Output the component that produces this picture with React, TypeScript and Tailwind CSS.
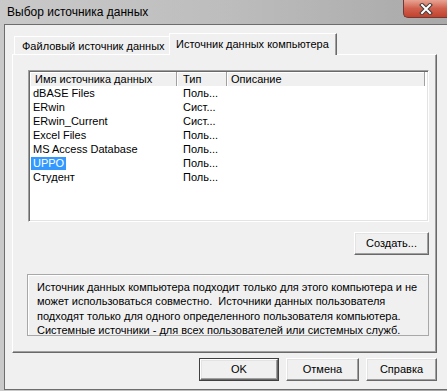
import React from "react";

const rows: [string, string][] = [
  ["dBASE Files", "Поль..."],
  ["ERwin", "Сист..."],
  ["ERwin_Current", "Сист..."],
  ["Excel Files", "Поль..."],
  ["MS Access Database", "Поль..."],
  ["UPPO", "Поль..."],
  ["Студент", "Поль..."],
];

function Button({ label, w, isDefault }: { label: string; w: string; isDefault?: boolean }) {
  return (
    <div className={`${w} h-[23px] shrink-0 ${isDefault ? "border border-[#404040]" : ""}`}>
      <div className="h-full w-full flex items-center justify-center bg-[#f0f0f0] border border-t-white border-l-white border-r-[#696969] border-b-[#696969] shadow-[inset_-1px_-1px_0_#a0a0a0,inset_1px_1px_0_#e3e3e3] text-[11px] text-black">
        {label}
      </div>
    </div>
  );
}

export default function App() {
  return (
    <div className="w-[447px] h-[391px] overflow-hidden flex flex-col bg-gradient-to-r from-[#c9c9c9] via-[#bdbdbd] to-[#a9a9a9] font-['Liberation_Sans',Arial,sans-serif] text-black">
      {/* Title bar */}
      <div className="h-[24px] flex items-start shrink-0">
        <div className="pl-[7px] pt-[5px] text-[12px] leading-[14px] whitespace-nowrap">Выбор источника данных</div>
        <div className="ml-auto w-[44px] h-[18px] rounded-bl-[5px] border-l border-b border-[#6e3a33] bg-gradient-to-b from-[#e8a393] via-[#d0604d] to-[#c2412c] flex items-center justify-center">
          <svg width="14" height="12" viewBox="0 0 14 12">
            <path d="M3 2 L11 10 M11 2 L3 10" stroke="#3c3c3c" strokeWidth="4" strokeLinecap="square" />
            <path d="M3 2 L11 10 M11 2 L3 10" stroke="#ffffff" strokeWidth="2" strokeLinecap="square" />
          </svg>
        </div>
      </div>

      {/* Client area */}
      <div className="flex-1 flex pl-[4px] pb-[1px]">
        <div className="flex-1 bg-[#f0f0f0] border-l border-t border-b border-[#6d6d6d] flex flex-col">
          {/* Tabs */}
          <div className="h-[29px] shrink-0 flex items-end pl-[9px] relative z-10">
            <div className="w-[155px] h-[18px] border-t border-l border-white bg-[#f0f0f0] text-[11px] leading-[14px] pl-[7px] pt-[2px] whitespace-nowrap">
              Файловый источник данных
            </div>
            <div className="w-[168px] h-[22px] -mb-[1px] border-t border-l border-white border-r border-r-[#696969] shadow-[inset_-1px_0_0_#a0a0a0] bg-[#f0f0f0] text-[11px] leading-[14px] pl-[6px] pt-[3px] whitespace-nowrap">
              Источник данных компьютера
            </div>
          </div>

          {/* Tab panel */}
          <div className="ml-[7px] w-[425px] h-[299px] shrink-0 border-t border-l border-white border-r border-b border-r-[#696969] border-b-[#696969] shadow-[inset_-1px_-1px_0_#a0a0a0] pl-[15px] pt-[15px] flex flex-col">
            {/* List */}
            <div className="w-[401px] h-[152px] shrink-0 bg-white border border-t-[#a0a0a0] border-l-[#a0a0a0] border-r-white border-b-white shadow-[inset_1px_1px_0_#696969,inset_-1px_-1px_0_#e3e3e3] p-[1px] pr-[3px] text-[11px] leading-[13px]">
              <div className="flex h-[14px] bg-[#f0f0f0]">
                <div className="w-[147px] pl-[5px] border-r border-[#a0a0a0] shadow-[inset_1px_1px_0_#fff] flex items-center">Имя источника данных</div>
                <div className="w-[50px] pl-[6px] border-r border-[#a0a0a0] shadow-[inset_1px_1px_0_#fff] flex items-center">Тип</div>
                <div className="flex-1 pl-[4px] border-r border-[#a0a0a0] shadow-[inset_1px_1px_0_#fff] flex items-center">Описание</div>
              </div>
              {rows.map(([name, type]) => (
                <div key={name} className="flex h-[14px] items-center">
                  <div className="w-[147px] pl-[1px]">
                    <span className={`px-[2px] inline-block h-[13px] ${name === "UPPO" ? "bg-[#3399ff] text-white" : ""}`}>{name}</span>
                  </div>
                  <div className="w-[50px] pl-[6px]">{type}</div>
                </div>
              ))}
            </div>

            {/* Create button */}
            <div className="w-[401px] flex justify-end mt-[10px]">
              <Button label="Создать..." w="w-[75px]" />
            </div>

            {/* Description */}
            <div className="mt-[19px] -ml-[1px] w-[402px] h-[62px] shrink-0 border border-[#a8a8a8] shadow-[inset_1px_1px_0_#fff] pl-[9px] pt-[5px] text-[11px] leading-[14.3px] whitespace-nowrap">
              Источник данных компьютера подходит только для этого компьютера и не
              <br />
              может использоваться совместно.&nbsp; Источники данных пользователя
              <br />
              подходят только для одного определенного пользователя компьютера.
              <br />
              Системные источники - для всех пользователей или системных служб.
            </div>
          </div>

          {/* Dialog buttons */}
          <div className="ml-[7px] w-[425px] flex justify-end gap-[7px] mt-[5px] shrink-0">
            <Button label="OK" w="w-[80px]" isDefault />
            <Button label="Отмена" w="w-[73px]" />
            <Button label="Справка" w="w-[71px]" />
          </div>
        </div>
      </div>
    </div>
  );
}
